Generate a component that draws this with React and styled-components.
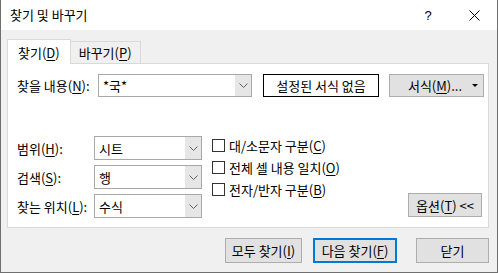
import React from "react";
import styled, { createGlobalStyle } from "styled-components";

const Global = createGlobalStyle`
  html, body {
    margin: 0;
    padding: 0;
    background: #ffffff;
  }
  body {
    font-family: "Noto Sans CJK KR", "Noto Sans", sans-serif;
    font-size: 13px;
    color: #000;
  }
  u {
    text-decoration: underline;
    text-underline-offset: 2px;
    text-decoration-thickness: 1px;
  }
`;

const Chevron = () => (
  <svg width="9" height="5" viewBox="0 0 9 5">
    <path d="M0.5 0.5 L4.5 4.5 L8.5 0.5" fill="none" stroke="#606060" strokeWidth="1" />
  </svg>
);

const Combo = ({ value, width }) => (
  <ComboBox $width={width}>
    <ComboText>{value}</ComboText>
    <ComboDrop>
      <Chevron />
    </ComboDrop>
  </ComboBox>
);

const Check = ({ children }) => (
  <CheckRow>
    <CheckBox />
    <span>{children}</span>
  </CheckRow>
);

const App = () => {
  return (
    <>
      <Global />
      <Window>
        <TitleBar>
          <Title>찾기 및 바꾸기</Title>
          <TitleButtons>
            <TitleBtn>?</TitleBtn>
            <TitleBtn>
              <svg width="11" height="11" viewBox="0 0 11 11">
                <path d="M0.5 0.5 L10.5 10.5 M10.5 0.5 L0.5 10.5" stroke="#000" strokeWidth="1" />
              </svg>
            </TitleBtn>
          </TitleButtons>
        </TitleBar>

        <Body>
          <Tabs>
            <Tab $active>
              찾기(<u>D</u>)
            </Tab>
            <Tab>
              바꾸기(<u>P</u>)
            </Tab>
          </Tabs>

          <Panel>
            <FindRow>
              <Label $width={81}>
                찾을 내용(<u>N</u>):
              </Label>
              <Combo value="*국*" width={154} />
              <FormatPreview>설정된 서식 없음</FormatPreview>
              <FormatButton>
                <FormatText>
                  서식(<u>M</u>)...
                </FormatText>
                <Arrow />
              </FormatButton>
            </FindRow>

            <Lower>
              <OptionGrid>
                <Label>
                  범위(<u>H</u>):
                </Label>
                <Combo value="시트" width={108} />
                <Label>
                  검색(<u>S</u>):
                </Label>
                <Combo value="행" width={108} />
                <Label>
                  찾는 위치(<u>L</u>):
                </Label>
                <Combo value="수식" width={108} />
              </OptionGrid>

              <CheckCol>
                <Check>
                  대/소문자 구분(<u>C</u>)
                </Check>
                <Check>
                  전체 셀 내용 일치(<u>O</u>)
                </Check>
                <Check>
                  전자/반자 구분(<u>B</u>)
                </Check>
              </CheckCol>

              <OptionsButton>
                옵션(<u>T</u>) &lt;&lt;
              </OptionsButton>
            </Lower>
          </Panel>

          <Footer>
            <Button $width={77}>
              모두 찾기(<u>I</u>)
            </Button>
            <Button $width={84} $default>
              다음 찾기(<u>F</u>)
            </Button>
            <Button $width={73}>닫기</Button>
          </Footer>
        </Body>
      </Window>
    </>
  );
};

export default App;

const Window = styled.div`
  width: 498px;
  height: 273px;
  box-sizing: border-box;
  border: 1px solid #6f6f6f;
  border-top: none;
  display: flex;
  flex-direction: column;
  background: #f0f0f0;
`;

const TitleBar = styled.div`
  height: 30px;
  flex: none;
  background: #ffffff;
  display: flex;
  align-items: center;
`;

const Title = styled.div`
  padding-left: 9px;
  flex: 1;
  line-height: 30px;
`;

const TitleButtons = styled.div`
  display: flex;
  height: 30px;
`;

const TitleBtn = styled.div`
  width: 46px;
  height: 30px;
  display: flex;
  align-items: center;
  justify-content: center;
  font-family: "Liberation Sans", sans-serif;
  font-size: 13px;
`;

const Body = styled.div`
  flex: 1;
  display: flex;
  flex-direction: column;
  padding: 9px 8px 0 6px;
`;

const Tabs = styled.div`
  display: flex;
  align-items: flex-end;
  height: 24px;
`;

const Tab = styled.div`
  box-sizing: border-box;
  height: ${(p) => (p.$active ? "25px" : "22px")};
  margin-bottom: ${(p) => (p.$active ? "-1px" : "0")};
  padding: ${(p) => (p.$active ? "0 10px" : "0 8px")};
  background: ${(p) => (p.$active ? "#ffffff" : "#f0f0f0")};
  border: 1px solid #d9d9d9;
  border-bottom: none;
  border-left: ${(p) => (p.$active ? "1px solid #d9d9d9" : "none")};
  display: flex;
  align-items: center;
  position: relative;
  z-index: ${(p) => (p.$active ? 1 : 0)};
`;

const Panel = styled.div`
  height: 165px;
  box-sizing: border-box;
  background: #ffffff;
  border: 1px solid #d9d9d9;
  padding: 10px 0 0 8px;
  display: flex;
  flex-direction: column;
`;

const FindRow = styled.div`
  display: flex;
  align-items: center;
  height: 23px;
`;

const Label = styled.div`
  width: ${(p) => (p.$width ? `${p.$width}px` : "auto")};
  flex: none;
  padding-left: 1px;
  white-space: nowrap;
`;

const ComboBox = styled.div`
  width: ${(p) => p.$width}px;
  height: 100%;
  box-sizing: border-box;
  border: 1px solid #a8a8a8;
  background: #ffffff;
  display: flex;
  align-items: stretch;
`;

const ComboText = styled.div`
  flex: 1;
  padding-left: 4px;
  display: flex;
  align-items: center;
`;

const ComboDrop = styled.div`
  width: 16px;
  background: #e6e6e6;
  display: flex;
  align-items: center;
  justify-content: center;
`;

const FormatPreview = styled.div`
  margin-left: 11px;
  width: 116px;
  height: 23px;
  box-sizing: border-box;
  border: 1px solid #000;
  display: flex;
  align-items: center;
  justify-content: center;
`;

const FormatButton = styled.div`
  margin-left: 10px;
  width: 95px;
  height: 23px;
  box-sizing: border-box;
  border: 1px solid #adadad;
  background: #e1e1e1;
  display: flex;
  align-items: center;
  padding: 0 5px 0 8px;
`;

const FormatText = styled.div`
  flex: 1;
  text-align: center;
`;

const Arrow = styled.div`
  width: 0;
  height: 0;
  border-left: 3px solid transparent;
  border-right: 3px solid transparent;
  border-top: 3px solid #000;
`;

const Lower = styled.div`
  margin-top: 39px;
  display: flex;
  align-items: flex-start;
`;

const OptionGrid = styled.div`
  display: grid;
  grid-template-columns: 78px 108px;
  grid-auto-rows: 24px;
  row-gap: 5px;
  align-items: center;
`;

const CheckCol = styled.div`
  margin-left: 10px;
  margin-top: -2px;
  display: flex;
  flex-direction: column;
`;

const CheckRow = styled.div`
  height: 22px;
  display: flex;
  align-items: center;
  gap: 4px;
`;

const CheckBox = styled.div`
  width: 13px;
  height: 13px;
  flex: none;
  box-sizing: border-box;
  border: 1px solid #333333;
  background: #ffffff;
`;

const OptionsButton = styled.div`
  margin-left: auto;
  margin-right: 6px;
  align-self: flex-end;
  margin-bottom: 1px;
  width: 74px;
  height: 24px;
  box-sizing: border-box;
  border: 1px solid #adadad;
  background: #e1e1e1;
  display: flex;
  align-items: center;
  justify-content: center;
`;

const Footer = styled.div`
  margin-top: 10px;
  display: flex;
  justify-content: flex-end;

  & > :nth-child(2) {
    margin-left: 11px;
  }
  & > :nth-child(3) {
    margin-left: 19px;
  }
`;

const Button = styled.div`
  width: ${(p) => p.$width}px;
  height: 25px;
  box-sizing: border-box;
  border: ${(p) => (p.$default ? "2px solid #0078d7" : "1px solid #adadad")};
  background: #e1e1e1;
  display: flex;
  align-items: center;
  justify-content: center;
`;
